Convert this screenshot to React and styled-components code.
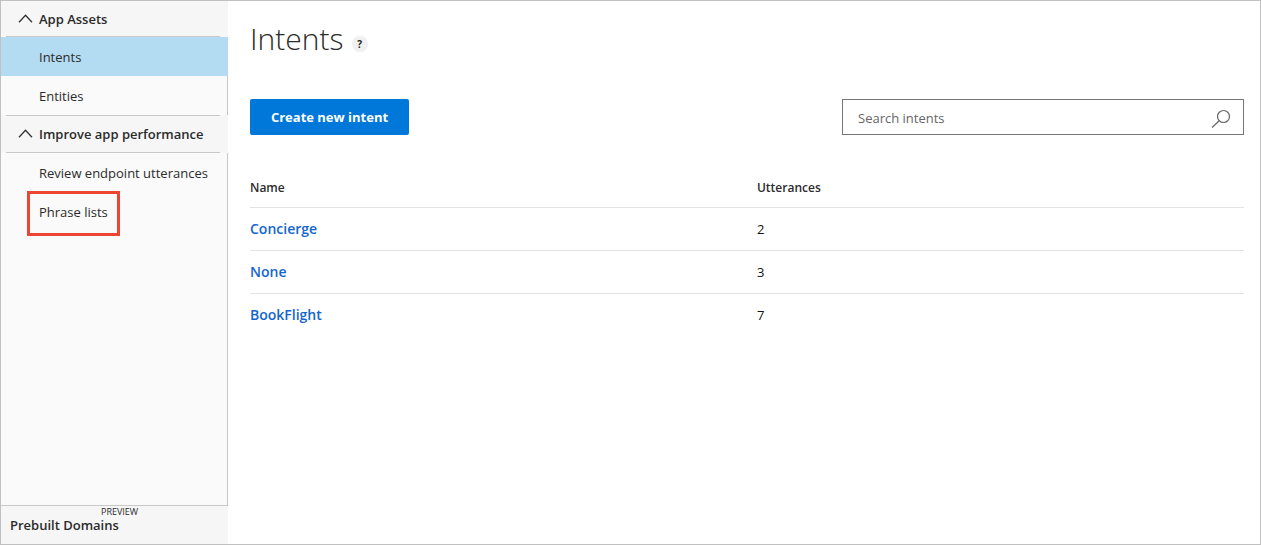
import React from "react";
import styled, { createGlobalStyle, css } from "styled-components";

const GlobalStyle = createGlobalStyle`
  *, *::before, *::after { box-sizing: border-box; }
  body {
    margin: 0;
    background: #fff;
    color: #2b2b2b;
    font-family: "Open Sans", "Noto Sans", sans-serif;
    font-size: 13px;
    line-height: 20px;
  }
`;

const Frame = styled.div`
  display: flex;
  min-height: 100vh;
  border: 1px solid #c0c0c0;
`;

const Sidebar = styled.nav`
  display: flex;
  flex-direction: column;
  flex: 0 0 227px;
  background: #fafafa;
`;

const SectionHeader = styled.button`
  display: flex;
  align-items: center;
  width: 100%;
  height: ${(p) => (p.$ruled ? 38 : 36)}px;
  padding: 0 8px 0 5px;
  border: 0;
  background: #f6f6f6;
  color: inherit;
  font: inherit;
  font-weight: 600;
  text-align: left;
  cursor: pointer;
`;

const HeaderInner = styled.span`
  display: flex;
  align-items: center;
  gap: 6px;
  flex: 1;
  height: 100%;
  padding-left: 12px;
  border-bottom: 1px solid #c8c8c8;
  ${(p) => p.$ruled && css`border-top: 1px solid #c8c8c8;`}
`;

const NavList = styled.ul`
  flex: ${(p) => (p.$fill ? 1 : "none")};
  margin: 0;
  padding: 0;
  list-style: none;
  border-right: 1px solid #c8c8c8;
`;

const NavLink = styled.a`
  display: block;
  position: relative;
  padding: 10px 0 9px 38px;
  color: inherit;
  text-decoration: none;
  white-space: nowrap;
  ${(p) => p.$active && css`
    margin-right: -1px;
    background: #b3dbf2;
  `}
  ${(p) => p.$marked && css`
    &::after {
      content: "";
      position: absolute;
      top: -1px;
      left: 26px;
      width: 93px;
      height: 45px;
      border: 3px solid #ed4533;
    }
  `}
`;

const SidebarFooter = styled.a`
  display: block;
  position: relative;
  height: 39px;
  padding: 9px;
  border-top: 1px solid #c8c8c8;
  background: #f6f6f6;
  color: inherit;
  font-weight: 600;
  text-decoration: none;
`;

const PreviewBadge = styled.span`
  position: absolute;
  top: 0;
  left: 100px;
  font-size: 9px;
  font-weight: 400;
  line-height: 12px;
`;

const Main = styled.main`
  flex: 1;
  min-width: 0;
  padding: 18px 16px 16px 22px;
`;

const TitleRow = styled.header`
  display: flex;
  align-items: center;
  gap: 8px;
`;

const Title = styled.h1`
  margin: 0;
  font-size: 30px;
  font-weight: 300;
  line-height: 40px;
`;

const HelpButton = styled.button`
  width: 16px;
  height: 16px;
  margin-top: 10px;
  padding: 0;
  border: 0;
  border-radius: 50%;
  background: #f0f0f0;
  color: #222;
  font: inherit;
  font-size: 10px;
  font-weight: 700;
  line-height: 16px;
`;

const Toolbar = styled.div`
  display: flex;
  justify-content: space-between;
  align-items: center;
  margin-top: 40px;
`;

const PrimaryButton = styled.button`
  width: 159px;
  height: 36px;
  padding: 0;
  border: 0;
  border-radius: 2px;
  background: #0078d9;
  color: #fff;
  font: inherit;
  font-weight: 700;
  cursor: pointer;
`;

const SearchBox = styled.label`
  display: flex;
  align-items: center;
  width: 402px;
  height: 36px;
  padding: 2px 12px 0 15px;
  border: 1px solid #767676;
`;

const SearchInput = styled.input`
  flex: 1;
  min-width: 0;
  padding: 0;
  border: 0;
  outline: 0;
  background: none;
  color: inherit;
  font: inherit;
  &::placeholder { color: #666; opacity: 1; }
`;

const Table = styled.table`
  width: 100%;
  margin-top: 34px;
  border-collapse: collapse;
  table-layout: fixed;
`;

const HeadCell = styled.th`
  width: ${(p) => p.$width || "auto"};
  height: 38px;
  padding: 0;
  font-size: 12px;
  font-weight: 600;
  text-align: left;
`;

const Cell = styled.td`
  height: 43px;
  padding: 0;
  border-top: 1px solid #e3e3e3;
  color: #111;
`;

const IntentLink = styled.a`
  color: #1366cf;
  font-size: 14px;
  font-weight: 600;
  text-decoration: none;
`;

const Chevron = () => (
  <svg width="15" height="10" viewBox="0 0 15 10" fill="none" stroke="#333" strokeWidth="1.3" aria-hidden="true">
    <path d="M1 8.2 7.5 1.2 14 8.2" />
  </svg>
);

const SearchIcon = () => (
  <svg width="20" height="20" viewBox="0 0 20 20" fill="none" stroke="#666" strokeWidth="1.2" aria-hidden="true">
    <circle cx="12.5" cy="8.5" r="6" />
    <path d="M8.2 12.8 1 19.5" />
  </svg>
);

const Section = ({ title, ruled, fill, items }) => (
  <>
    <SectionHeader type="button" aria-expanded="true" $ruled={ruled}>
      <HeaderInner $ruled={ruled}>
        <Chevron />
        {title}
      </HeaderInner>
    </SectionHeader>
    <NavList $fill={fill}>
      {items.map((item) => (
        <li key={item.label}>
          <NavLink href="#" $active={item.active} $marked={item.marked}>
            {item.label}
          </NavLink>
        </li>
      ))}
    </NavList>
  </>
);

const assets = [{ label: "Intents", active: true }, { label: "Entities" }];
const improve = [{ label: "Review endpoint utterances" }, { label: "Phrase lists", marked: true }];
const intents = [
  { name: "Concierge", utterances: 2 },
  { name: "None", utterances: 3 },
  { name: "BookFlight", utterances: 7 },
];

export default function App() {
  return (
    <>
      <GlobalStyle />
      <Frame>
        <Sidebar>
          <Section title="App Assets" items={assets} />
          <Section title="Improve app performance" items={improve} ruled fill />
          <SidebarFooter href="#">
            Prebuilt Domains
            <PreviewBadge>PREVIEW</PreviewBadge>
          </SidebarFooter>
        </Sidebar>
        <Main>
          <TitleRow>
            <Title>Intents</Title>
            <HelpButton type="button">?</HelpButton>
          </TitleRow>
          <Toolbar>
            <PrimaryButton type="button">Create new intent</PrimaryButton>
            <SearchBox>
              <SearchInput type="text" placeholder="Search intents" aria-label="Search intents" />
              <SearchIcon />
            </SearchBox>
          </Toolbar>
          <Table>
            <thead>
              <tr>
                <HeadCell scope="col" $width="51%">Name</HeadCell>
                <HeadCell scope="col">Utterances</HeadCell>
              </tr>
            </thead>
            <tbody>
              {intents.map((intent) => (
                <tr key={intent.name}>
                  <Cell><IntentLink href="#">{intent.name}</IntentLink></Cell>
                  <Cell>{intent.utterances}</Cell>
                </tr>
              ))}
            </tbody>
          </Table>
        </Main>
      </Frame>
    </>
  );
}
